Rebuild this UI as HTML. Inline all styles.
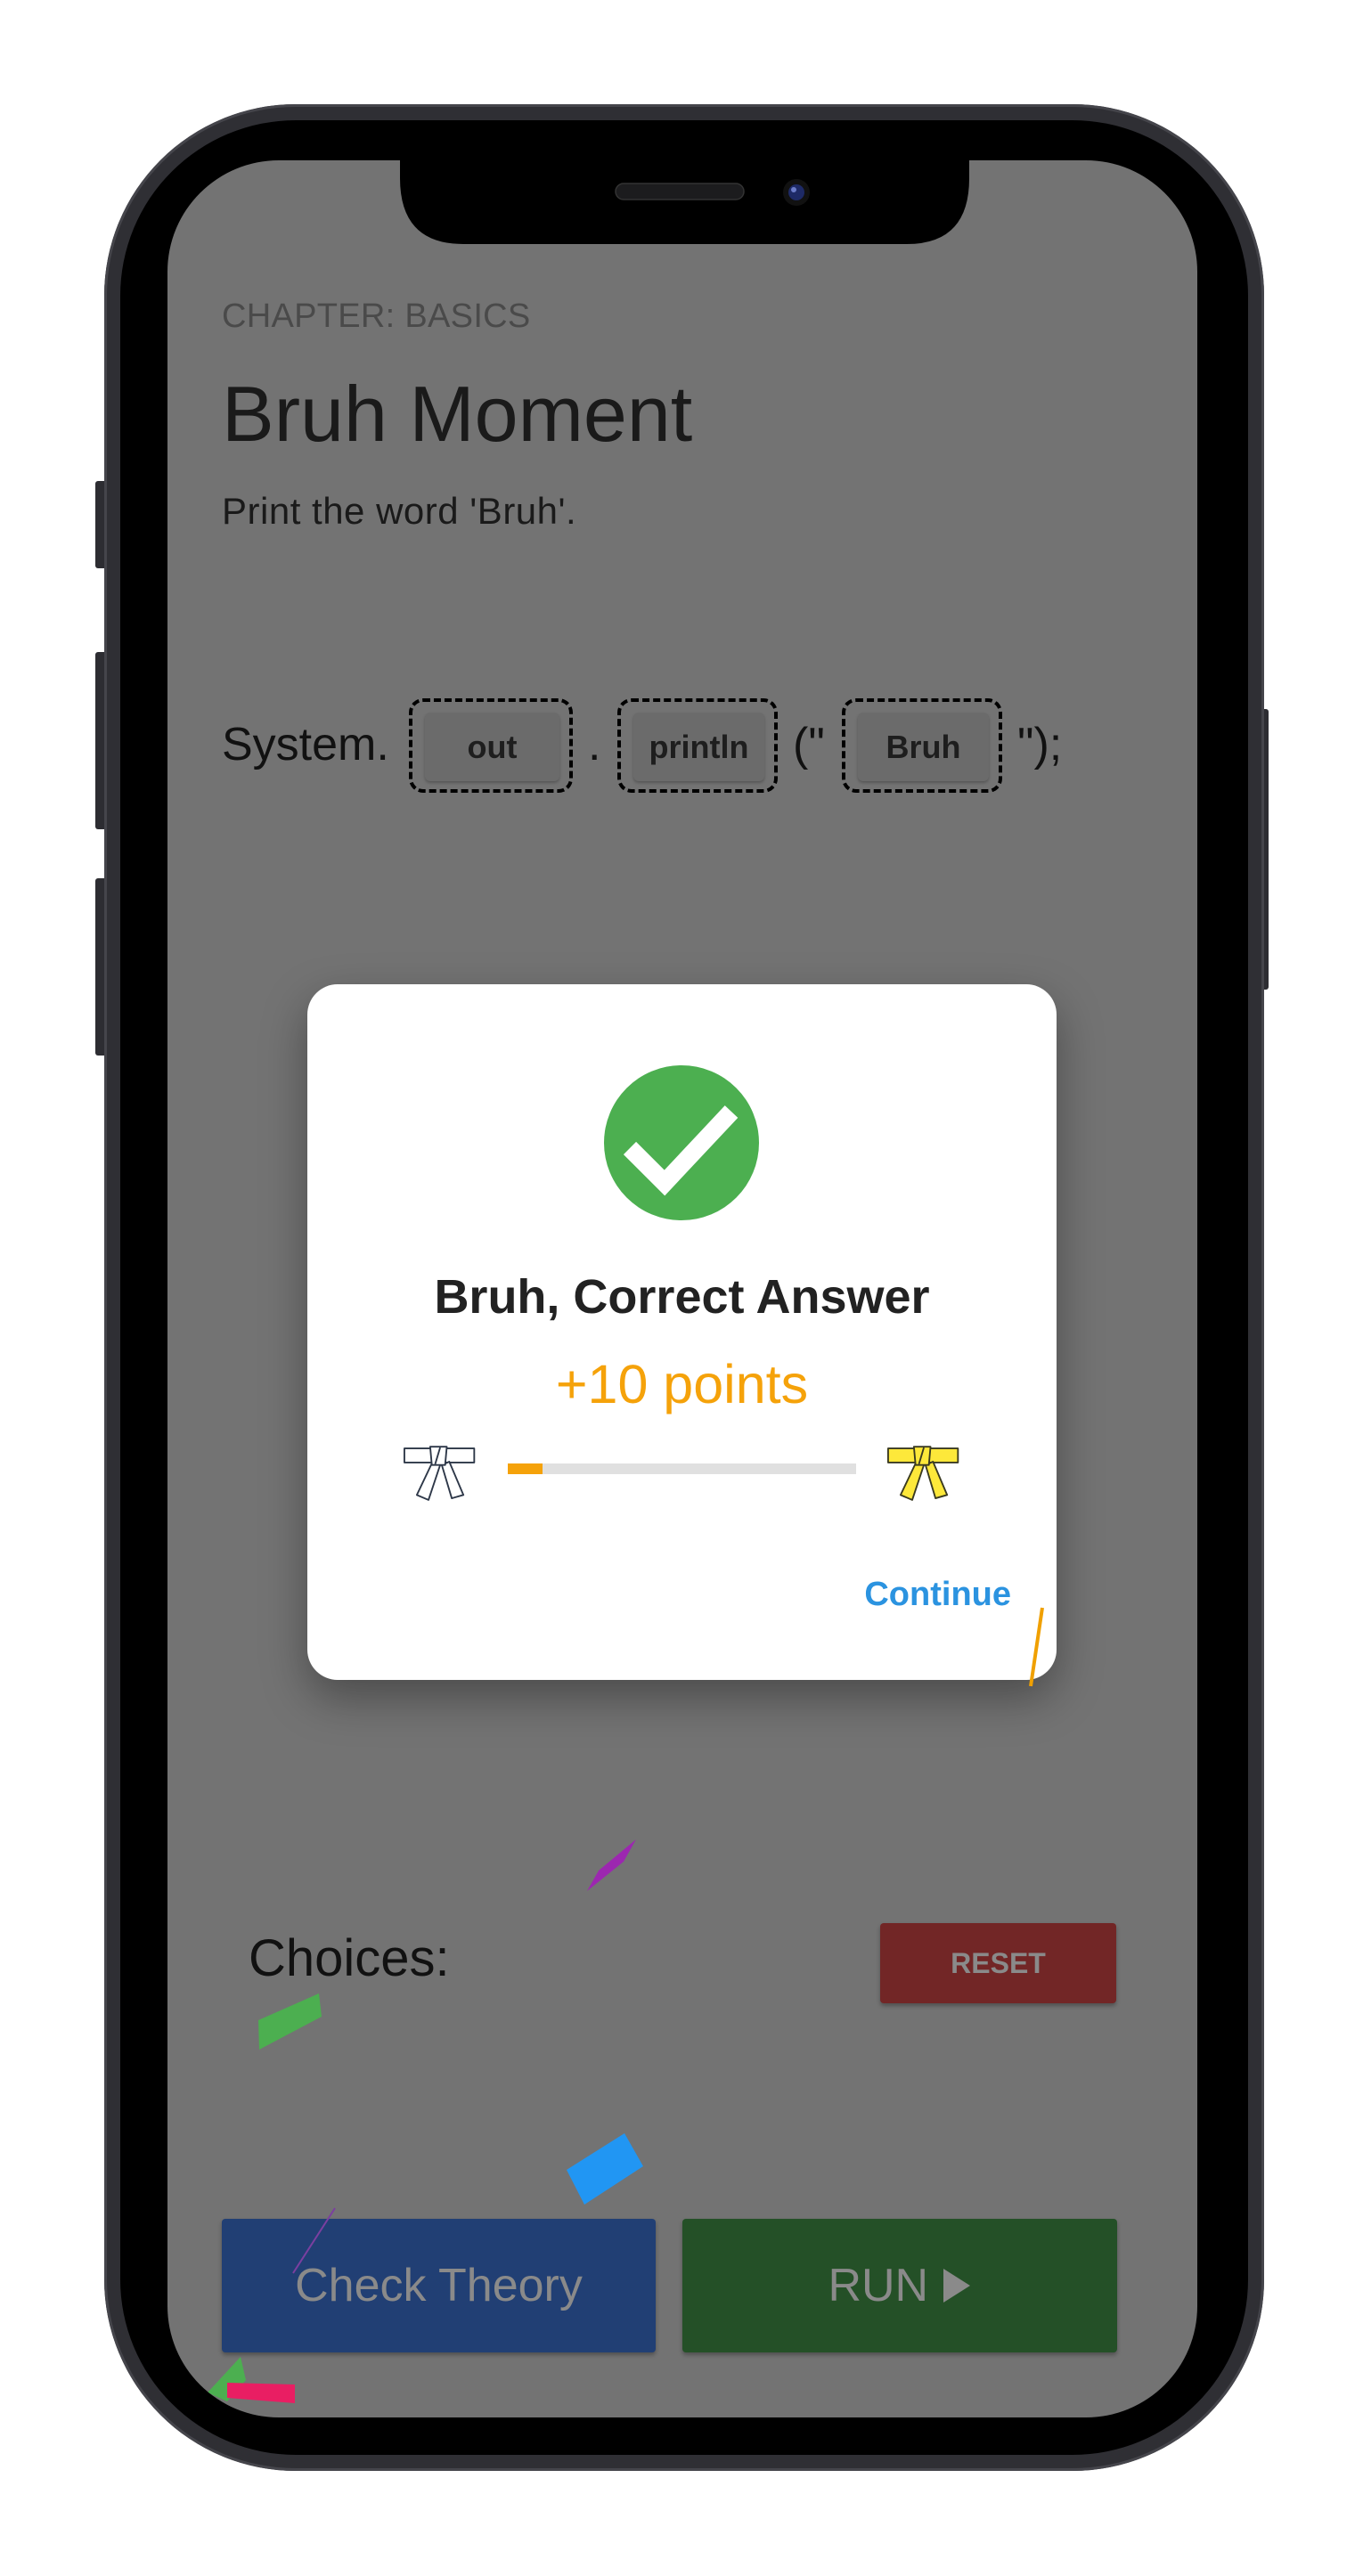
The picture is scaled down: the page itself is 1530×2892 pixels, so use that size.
<!DOCTYPE html>
<html><head><meta charset="utf-8"><style>
*{margin:0;padding:0;box-sizing:border-box}
body{width:1530px;height:2892px;background:#fff;position:relative;overflow:hidden;font-family:"Liberation Sans",sans-serif}
.abs{position:absolute}
.btnside{position:absolute;background:#2d2d32;border-radius:3px}
#frame{position:absolute;left:117px;top:117px;width:1302px;height:2657px;border-radius:215px;background:#2f2f34;box-shadow:inset 0 0 0 3px #45454b}
#bezel{position:absolute;left:135px;top:135px;width:1266px;height:2621px;border-radius:197px;background:#000}
#screen{position:absolute;left:188px;top:180px;width:1156px;height:2534px;border-radius:125px;background:#737373;overflow:hidden}
#in{position:absolute;left:-188px;top:-180px;width:1530px;height:2892px}
.box{position:absolute;border:4px dashed #000;border-radius:16px;top:784px;height:106px}
.chip{position:absolute;left:14px;right:11px;top:12px;bottom:9px;background:#6b6b6b;border-radius:6px;box-shadow:0 2px 3px rgba(0,0,0,.25);font-size:36px;color:#1e1e1e;font-weight:bold;display:flex;align-items:center;justify-content:center}
.code{position:absolute;font-size:52px;color:#111;top:806px}
</style></head><body>
<div class="btnside" style="left:107px;top:540px;width:14px;height:98px"></div>
<div class="btnside" style="left:107px;top:732px;width:14px;height:199px"></div>
<div class="btnside" style="left:107px;top:986px;width:14px;height:199px"></div>
<div class="btnside" style="left:1412px;top:796px;width:12px;height:315px"></div>
<div id="frame"></div>
<div id="bezel"></div>
<div id="screen"><div id="in">
 <div class="abs" style="left:249px;top:334px;font-size:38px;color:#4a4a4a;letter-spacing:0.3px">CHAPTER: BASICS</div>
 <div class="abs" style="left:249px;top:414px;font-size:88px;color:#1a1a1a">Bruh Moment</div>
 <div class="abs" style="left:249px;top:550px;font-size:42px;color:#1a1a1a;letter-spacing:0.5px">Print the word 'Bruh'.</div>
 <div class="code" style="left:249px">System.</div>
 <div class="box" style="left:459px;width:184px"><div class="chip">out</div></div>
 <div class="code" style="left:660px">.</div>
 <div class="box" style="left:693px;width:180px"><div class="chip">println</div></div>
 <div class="code" style="left:890px">("</div>
 <div class="box" style="left:945px;width:180px"><div class="chip">Bruh</div></div>
 <div class="code" style="left:1142px">");</div>

 <div class="abs" style="left:279px;top:2165px;font-size:58px;color:#111">Choices:</div>
 <div class="abs" style="left:988px;top:2159px;width:265px;height:90px;background:#722626;border-radius:4px;box-shadow:0 3px 5px rgba(0,0,0,.3);color:#8a8a8a;font-size:32px;font-weight:bold;display:flex;align-items:center;justify-content:center">RESET</div>
 <div class="abs" style="left:249px;top:2491px;width:487px;height:150px;background:#213f74;border-radius:4px;box-shadow:0 3px 5px rgba(0,0,0,.3);color:#8a8a8a;font-size:52px;display:flex;align-items:center;justify-content:center">Check Theory</div>
 <div class="abs" style="left:766px;top:2491px;width:488px;height:150px;background:#245027;border-radius:4px;box-shadow:0 3px 5px rgba(0,0,0,.3);color:#8a8a8a;font-size:52px;display:flex;align-items:center;justify-content:center">RUN&nbsp;<svg width="34" height="42" viewBox="0 0 34 42"><path d="M2 2 L32 21 L2 40Z" fill="#8a8a8a"/></svg></div>

 <svg class="abs" style="left:0;top:0" width="1530" height="2892">
  <path d="M714 2065 L700 2090 L659 2123 L672 2100Z" fill="#9c27b0"/>
  <path d="M290 2268 L358 2238 L361 2264 L291 2301Z" fill="#4caf50"/>
  <path d="M636 2436 L701 2395 L722 2432 L656 2475Z" fill="#2196f3"/>
  <path d="M376 2479 L329 2552" stroke="#7b3fa0" stroke-width="2"/>
  <path d="M270 2646 L276 2672 L255 2696 L233 2686Z" fill="#4caf50"/>
  <path d="M255 2675 L331 2677 L331 2698 L255 2692Z" fill="#e91e63"/>
 </svg>

 <div class="abs" style="left:345px;top:1105px;width:841px;height:781px;background:#fff;border-radius:34px;box-shadow:0 20px 50px rgba(0,0,0,.35)">
  <svg class="abs" style="left:332px;top:90px" width="176" height="176" viewBox="0 0 176 176"><circle cx="88" cy="88" r="87" fill="#4caf50"/><path d="M30 94 L69 133 L144 53" fill="none" stroke="#fff" stroke-width="20"/></svg>
  <div class="abs" style="left:0;width:841px;top:320px;text-align:center;font-size:54px;font-weight:bold;color:#222">Bruh, Correct Answer</div>
  <div class="abs" style="left:0;width:841px;top:414px;text-align:center;font-size:61px;color:#f5a20a">+10 points</div>
  <svg class="abs" style="left:108px;top:515px" width="84" height="70" viewBox="0 0 90 70"><g stroke="#2d3748" stroke-width="2" stroke-linejoin="round"><rect x="1" y="4" width="84" height="17" fill="#fff"/><path d="M35 20 L44 24 L30 66 L16 60Z" fill="#fff"/><path d="M46 24 L55 20 L72 60 L58 64Z" fill="#fff"/><path d="M32 2 L52 2 L50 24 L34 24Z" fill="#fff"/><path d="M44 3 L38 23"/></g></svg>
  <div class="abs" style="left:225px;top:538px;width:391px;height:12px;background:#e0e0e0"><div style="width:39px;height:12px;background:#f5a20a"></div></div>
  <svg class="abs" style="left:651px;top:515px" width="84" height="70" viewBox="0 0 90 70"><g stroke="#3a3a20" stroke-width="2" stroke-linejoin="round"><rect x="1" y="4" width="84" height="17" fill="#fde83a"/><path d="M35 20 L44 24 L30 66 L16 60Z" fill="#fde83a"/><path d="M46 24 L55 20 L72 60 L58 64Z" fill="#fde83a"/><path d="M32 2 L52 2 L50 24 L34 24Z" fill="#fde83a"/><path d="M44 3 L38 23"/></g></svg>
  <div class="abs" style="left:620px;top:664px;width:170px;text-align:right;font-size:38px;font-weight:bold;color:#2b93e0">Continue</div>
  <svg class="abs" style="left:800px;top:695px" width="40" height="100"><path d="M25 5 L12 93" stroke="#f0a000" stroke-width="4"/></svg>
 </div>
</div></div>
<svg class="abs" style="left:0;top:0" width="1530" height="300">
 <path d="M449 178 L449 200 Q449 274 520 274 L1018 274 Q1088 274 1088 200 L1088 178Z" fill="#000"/>
 <rect x="691" y="206" width="144" height="18" rx="9" fill="#1c1c1e" stroke="#333" stroke-width="1.5"/>
 <circle cx="894" cy="216" r="15" fill="#111"/>
 <circle cx="894" cy="216" r="9" fill="#1e2a66"/>
 <circle cx="891" cy="213" r="3" fill="#6b7cc9"/>
</svg>
</body></html>
